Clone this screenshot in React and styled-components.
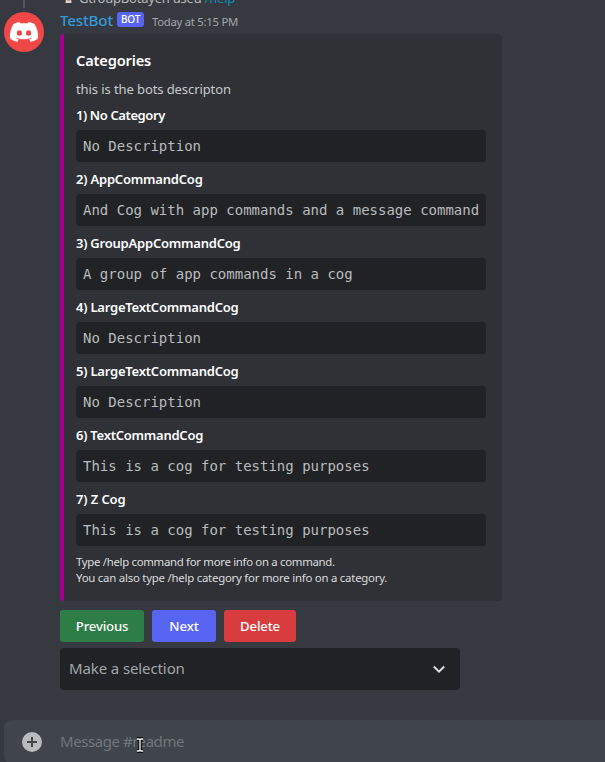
import React from "react";
import styled, { createGlobalStyle } from "styled-components";

const GlobalStyle = createGlobalStyle`
  * { box-sizing: border-box; }
  body { margin: 0; background: #36393f; overflow: hidden; }
`;

const Page = styled.div`
  display: flex;
  flex-direction: column;
  width: 605px;
  height: 762px;
  overflow: hidden;
  background: #36393f;
  color: #dcddde;
  font-family: "Noto Sans", sans-serif;
`;

const Text = styled.span`
  white-space: nowrap;
  letter-spacing: ${(p) => p.$track || 0}px;
`;

const ReplyBar = styled.div`
  display: flex;
  flex: none;
  align-items: flex-end;
  height: 11px;
  padding-left: 22px;
  color: #b9bbbe;
  font-size: 13px;
  line-height: 18px;
`;

const ReplySpine = styled.i`
  width: 2px;
  height: 8px;
  margin: 0 41px 3px 1px;
  background: #4f545c;
`;

const ReplyAvatar = styled.svg`
  width: 8px;
  height: 11px;
  margin: 0 6px 1px -1px;
`;

const ReplyText = styled(Text)`
  height: 22px;
`;

const Command = styled.b`
  font-weight: 400;
  color: #0a90bd;
`;

const Message = styled.article`
  display: flex;
  flex: none;
  height: 709px;
  padding-left: 4px;
`;

const Avatar = styled.div`
  display: flex;
  flex: none;
  align-items: center;
  justify-content: center;
  width: 40px;
  height: 40px;
  margin: 1px 16px 0 0;
  border-radius: 50%;
  background: #f04747;
`;

const Body = styled.div`
  display: flex;
  flex-direction: column;
  align-items: flex-start;
`;

const Header = styled.header`
  display: flex;
  align-items: center;
  height: 20px;
  margin-bottom: 3px;
`;

const Author = styled(Text)`
  margin-top: -2px;
  font-size: 15.2px;
  font-weight: 500;
  line-height: 20px;
  color: #3498db;
`;

const BotTag = styled.span`
  width: 27px;
  height: 15px;
  margin: -3px 8px 0 4px;
  border-radius: 3px;
  background: #5865f2;
  color: #fff;
  font-size: 10px;
  font-weight: 500;
  line-height: 15px;
  letter-spacing: -0.25px;
  text-align: center;
`;

const Time = styled(Text)`
  margin-top: 1px;
  font-size: 11.3px;
  line-height: 20px;
  color: #a3a6aa;
`;

const Embed = styled.section`
  width: 442px;
  height: 567px;
  padding: 15px 16px 15px 12px;
  border-left: 4px solid #a6008f;
  border-radius: 4px;
  background: #2f3136;
`;

const Title = styled.h1`
  margin: 0 0 9px;
  color: #fff;
  font-size: 14.6px;
  font-weight: 600;
  line-height: 22px;
`;

const Description = styled.p`
  margin: 0 0 8px;
  font-size: 13px;
  line-height: 18px;
  color: #c8cacd;
`;

const Field = styled.div`
  margin-bottom: 8px;
`;

const FieldName = styled.h2`
  margin: 0 0 6px;
  color: #fff;
  font-size: 13px;
  font-weight: 600;
  line-height: 18px;
`;

const Code = styled.pre`
  height: 32px;
  margin: 0;
  padding: 0 7px;
  border-radius: 4px;
  background: #202225;
  color: #b9bbbe;
  font-family: "DejaVu Sans Mono", monospace;
  font-size: 14px;
  line-height: 32px;
`;

const Footer = styled.footer`
  display: flex;
  flex-direction: column;
  font-size: 11.4px;
  line-height: 16px;
`;

const Actions = styled.div`
  display: flex;
  gap: 8px;
  margin: 9px 0 6px;
`;

const Button = styled.button`
  width: ${(p) => p.$width}px;
  height: 32px;
  padding: 0;
  border: 0;
  border-radius: 3px;
  background: ${(p) => p.$color};
  color: #fff;
  font: 500 13.2px/32px "Noto Sans", sans-serif;
`;

const Select = styled.div`
  display: flex;
  align-items: center;
  justify-content: space-between;
  width: 400px;
  height: 42px;
  padding: 0 13px 0 9px;
  border-radius: 4px;
  background: #202225;
  color: #a3a6aa;
  font-size: 15px;
`;

const SelectLabel = styled(Text)`
  margin-bottom: 2px;
`;

const Composer = styled.div`
  display: flex;
  flex: none;
  align-items: center;
  width: 620px;
  height: 44px;
  margin-left: 4px;
  padding-left: 18px;
  border-radius: 8px;
  background: #40444b;
  color: #72767d;
  font-size: 15px;
  font-weight: 400;
`;

const Placeholder = styled.div`
  position: relative;
  margin: 0 0 2px 18px;
`;

const TextCursor = styled.svg`
  position: absolute;
  left: 74px;
  top: 5px;
`;

const fields = [
  ["1) No Category", "No Description", -0.39],
  ["2) AppCommandCog", "And Cog with app commands and a message command", -0.2],
  ["3) GroupAppCommandCog", "A group of app commands in a cog", -0.22],
  ["4) LargeTextCommandCog", "No Description", -0.21],
  ["5) LargeTextCommandCog", "No Description", -0.21],
  ["6) TextCommandCog", "This is a cog for testing purposes", -0.24],
  ["7) Z Cog", "This is a cog for testing purposes", -0.1],
];

const buttons = [
  ["Previous", "#2d7d46", 84, -0.2],
  ["Next", "#5865f2", 64, -0.1],
  ["Delete", "#d83c3e", 72, -0.15],
];

export default function App() {
  return (
    <Page>
      <GlobalStyle />
      <ReplyBar>
        <ReplySpine />
        <ReplyAvatar viewBox="0 0 8 11">
          <path d="M1 0h5l.5 4H.5z" fill="#e8cfc4" />
          <path d="M2 0h3v1.500H2z" fill="#8d6a60" />
        </ReplyAvatar>
        <ReplyText $track={-0.22}>
          GtroupBotayen used <Command>/help</Command>
        </ReplyText>
      </ReplyBar>
      <Message>
        <Avatar>
          <svg width="30" height="22" viewBox="0 0 30 22">
            <path
              d="M10.8 1C8.500 1.300 6.500 1.900 4.700 2.800 1.900 7 .6 11.600 .9 17.300c2 1.800 4.500 3 7.200 3.700l1.700-2.600c-1-.3-1.800-.7-2.600-1.200l.7-.5c4.500 2 9.700 2 14.200 0l.7.5c-.8.5-1.700.9-2.600 1.200L21.900 21c2.700-.7 5.200-1.900 7.200-3.700.3-5.700-1-10.300-3.800-14.500C23.500 1.900 21.500 1.300 19.200 1l-.8 1.500c-2.300-.3-4.500-.3-6.800 0z"
              fill="#fff"
            />
            <ellipse cx="10.400" cy="12" rx="2.600" ry="2.800" fill="#f04747" />
            <ellipse cx="19.600" cy="12" rx="2.600" ry="2.800" fill="#f04747" />
          </svg>
        </Avatar>
        <Body>
          <Header>
            <Author $track={-0.2}>TestBot</Author>
            <BotTag>BOT</BotTag>
            <Time $track={-0.26}>Today at 5:15 PM</Time>
          </Header>
          <Embed>
            <Title><Text $track={-0.16}>Categories</Text></Title>
            <Description><Text $track={-0.09}>this is the bots descripton</Text></Description>
            {fields.map(([name, value, track]) => (
              <Field key={name}>
                <FieldName><Text $track={track}>{name}</Text></FieldName>
                <Code>{value}</Code>
              </Field>
            ))}
            <Footer>
              <Text $track={-0.31}>Type /help command for more info on a command.</Text>
              <Text $track={-0.23}>You can also type /help category for more info on a category.</Text>
            </Footer>
          </Embed>
          <Actions>
            {buttons.map(([label, color, width, track]) => (
              <Button key={label} $color={color} $width={width}>
                <Text $track={track}>{label}</Text>
              </Button>
            ))}
          </Actions>
          <Select>
            <SelectLabel $track={-0.11}>Make a selection</SelectLabel>
            <svg width="16" height="16" viewBox="0 0 16 16">
              <path d="M2.800 5.500 8 10.700l5.200-5.200" fill="none" stroke="#dcddde" strokeWidth="2" />
            </svg>
          </Select>
        </Body>
      </Message>
      <Composer>
        <svg width="20" height="20" viewBox="0 0 20 20">
          <circle cx="10" cy="10" r="10" fill="#b9bbbe" />
          <path d="M10 5v10M5 10h10" stroke="#40444b" strokeWidth="2" />
        </svg>
        <Placeholder>
          <Text $track={-0.44}>Message #readme</Text>
          <TextCursor width="12" height="18" viewBox="0 0 12 18">
            <path d="M3 3h2l1 1 1-1h2M6 4v10M3 15h2l1-1 1 1h2" fill="none" stroke="#000" strokeWidth="3.400" />
            <path d="M3 3h2l1 1 1-1h2M6 4v10M3 15h2l1-1 1 1h2" fill="none" stroke="#fff" strokeWidth="1.300" />
          </TextCursor>
        </Placeholder>
      </Composer>
    </Page>
  );
}
